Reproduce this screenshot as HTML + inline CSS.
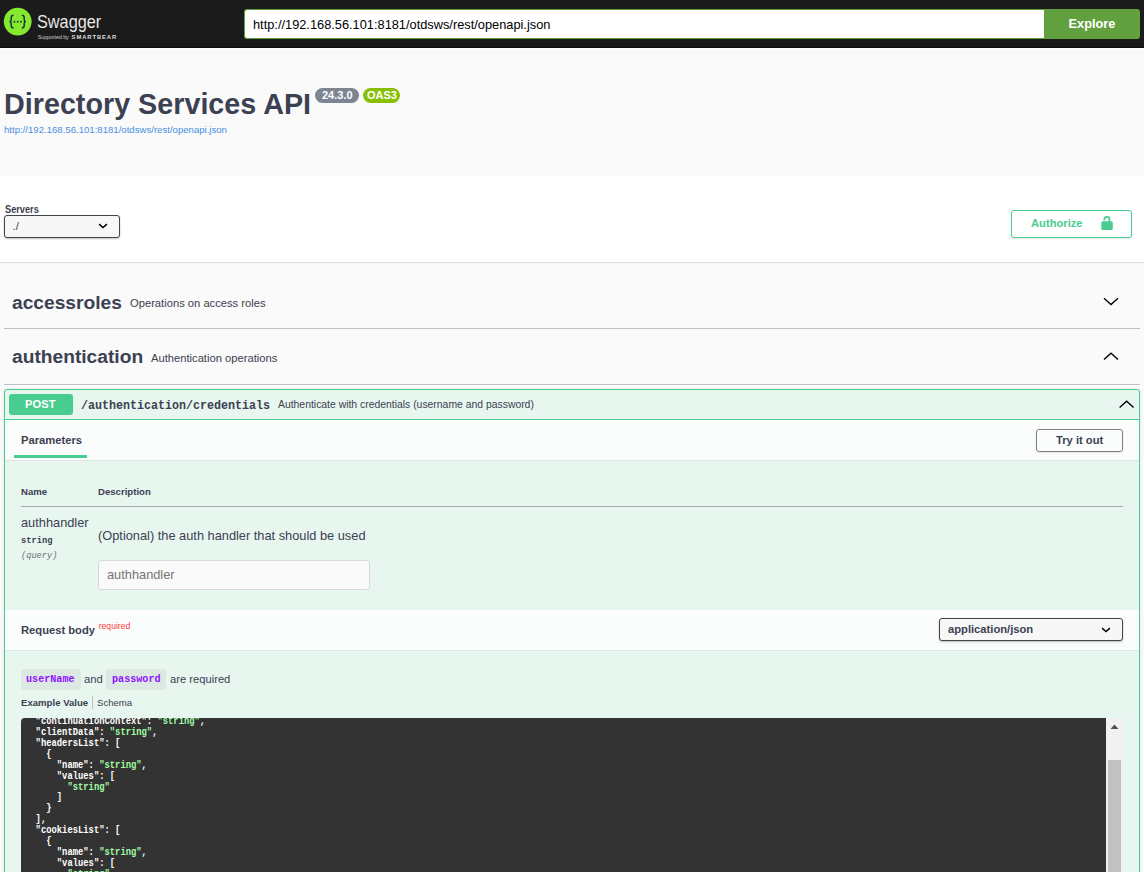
<!DOCTYPE html>
<html><head><meta charset="utf-8">
<style>
*{box-sizing:border-box;margin:0;padding:0}
html,body{width:1144px;height:872px;overflow:hidden;background:#fafafa;font-family:"Liberation Sans",sans-serif;color:#3b4151}
.a{position:absolute;white-space:pre}
#top{position:absolute;left:0;top:0;width:1144px;height:47px;background:#1b1b1b}
#top2{position:absolute;left:0;top:47px;width:1144px;height:1px;background:#0e0e0e}
#top3{position:absolute;left:0;top:48px;width:1144px;height:1px;background:#fff}
#srv{position:absolute;left:0;top:176px;width:1144px;height:86px;background:#fff}
.mono{font-family:"Liberation Mono",monospace}
</style></head><body>
<div id="top"></div><div id="top2"></div><div id="top3"></div>
<!-- logo -->
<svg class="a" style="left:0;top:0" width="130" height="47" viewBox="0 0 130 47">
  <circle cx="17.7" cy="21.6" r="13.9" fill="#85ea2d"/>
  <path d="M13.6 15.2c-1.6 0-2.4.7-2.4 2.2v2.3c0 1-.5 1.7-1.6 1.9 1.1.2 1.6.9 1.6 1.9v2.3c0 1.5.8 2.2 2.4 2.2" fill="none" stroke="#173647" stroke-width="1.5"/>
  <path d="M21.8 15.2c1.6 0 2.4.7 2.4 2.2v2.3c0 1 .5 1.7 1.6 1.9-1.1.2-1.6.9-1.6 1.9v2.3c0 1.5-.8 2.2-2.4 2.2" fill="none" stroke="#173647" stroke-width="1.5"/>
  <circle cx="14.4" cy="21.7" r="0.95" fill="#173647"/>
  <circle cx="17.7" cy="21.7" r="0.95" fill="#173647"/>
  <circle cx="21" cy="21.7" r="0.95" fill="#173647"/>
</svg>
<div class="a" style="left:37px;top:11px;font-size:18.5px;line-height:22px;color:#e8e8e8;transform:scaleX(0.88);transform-origin:0 0">Swagger</div>
<div class="a" style="left:37.8px;top:33.8px;font-size:5.4px;line-height:7px;color:#c8c8c8;letter-spacing:-0.1px">Supported by <b style="font-size:5.8px;letter-spacing:0.95px;color:#dedede;margin-left:1.5px">SMARTBEAR</b></div>

<!-- url input -->
<div class="a" style="left:244px;top:9px;width:802px;height:30px;background:#fff;border:1.5px solid #62a03f;border-right:none;border-radius:3px 0 0 3px"></div>
<div class="a" style="left:253px;top:16px;font-size:12.8px;color:#000;line-height:18px">http://192.168.56.101:8181/otdsws/rest/openapi.json</div>
<div class="a" style="left:1044px;top:9px;width:96px;height:30px;background:#62a03f;border-radius:0 3px 3px 0"></div>
<div class="a" style="left:1068.5px;top:15px;font-size:12.8px;font-weight:bold;color:#fff;line-height:18px">Explore</div>

<!-- info -->
<div class="a" style="left:4px;top:86px;font-size:29.8px;font-weight:bold;line-height:36px;color:#3b4151;transform:scaleX(0.964);transform-origin:0 0">Directory Services API</div>
<div class="a" style="left:315px;top:88px;width:44px;height:15px;background:#7d8492;border-radius:8px"></div>
<div class="a" style="left:322px;top:89px;font-size:11px;font-weight:bold;color:#fff;line-height:13px">24.3.0</div>
<div class="a" style="left:363px;top:88px;width:37px;height:15px;background:#89bf04;border-radius:8px"></div>
<div class="a" style="left:367px;top:89px;font-size:11px;font-weight:bold;color:#fff;line-height:13px">OAS3</div>
<div class="a" style="left:4px;top:124px;font-size:9.6px;color:#4990e2;line-height:12px">http://192.168.56.101:8181/otdsws/rest/openapi.json</div>

<!-- servers -->
<div id="srv"></div>
<div class="a" style="left:0;top:262px;width:1144px;height:1px;background:#dedede"></div>
<div class="a" style="left:0;top:263px;width:1144px;height:1px;background:#f4f4f4"></div>
<div class="a" style="left:4.8px;top:203.2px;font-size:10.6px;font-weight:bold;line-height:12px;transform:scaleX(0.87);transform-origin:0 0">Servers</div>
<div class="a" style="left:4px;top:215px;width:116px;height:23px;background:#f7f7f7;border:1.5px solid #41444e;border-radius:3px;box-shadow:0 1px 2px rgba(0,0,0,.25)"></div>
<div class="a" style="left:12.6px;top:220px;font-size:11.2px;line-height:12px">./</div>
<svg class="a" style="left:97px;top:221px" width="12" height="10" viewBox="0 0 12 10"><path d="M2.1 3.1l3.9 3.5 3.9-3.5" fill="none" stroke="#000" stroke-width="1.45"/></svg>

<div class="a" style="left:1011px;top:210px;width:121px;height:28px;border:1.6px solid #49cc90;border-radius:3px;background:#fff;box-shadow:0 1px 2px rgba(0,0,0,.1)"></div>
<div class="a" style="left:1031px;top:216px;font-size:11.2px;font-weight:bold;color:#49cc90;line-height:14px">Authorize</div>
<svg class="a" style="left:1094px;top:210px" width="26" height="26" viewBox="0 0 26 26">
  <path d="M10.4 9.6A2.55 2.55 0 0 1 15.5 9.4V12" fill="none" stroke="#49cc90" stroke-width="1.8" stroke-linecap="round"/>
  <rect x="7.3" y="11.3" width="11.5" height="8.7" rx="1.6" fill="#49cc90"/>
</svg>

<!-- tags -->
<div class="a" style="left:12px;top:290.5px;font-size:19.2px;font-weight:bold;line-height:24px">accessroles</div>
<div class="a" style="left:130px;top:296px;font-size:11.2px;line-height:14px">Operations on access roles</div>
<svg class="a" style="left:1102px;top:294px" width="18" height="14" viewBox="0 0 18 14"><path d="M2 4.2l7 6.4 7-6.4" fill="none" stroke="#000" stroke-width="1.35"/></svg>
<div class="a" style="left:4px;top:328px;width:1136px;height:1px;background:rgba(59,65,81,.3)"></div>

<div class="a" style="left:12px;top:345px;font-size:19.2px;font-weight:bold;line-height:24px">authentication</div>
<div class="a" style="left:151px;top:351px;font-size:11.2px;line-height:14px">Authentication operations</div>
<svg class="a" style="left:1102px;top:349px" width="18" height="14" viewBox="0 0 18 14"><path d="M2 10.6l7-6.4 7 6.4" fill="none" stroke="#000" stroke-width="1.35"/></svg>
<div class="a" style="left:4px;top:384px;width:1136px;height:1px;background:rgba(59,65,81,.3)"></div>

<!-- opblock -->
<div class="a" style="left:4px;top:389px;width:1136px;height:500px;background:#e8f6f0;border:1px solid #49cc90;border-radius:3px;box-shadow:0 0 3px rgba(0,0,0,.12)"></div>
<div class="a" style="left:5px;top:419px;width:1134px;height:1px;background:#49cc90"></div>
<div class="a" style="left:9px;top:394px;width:64px;height:21px;background:#49cc90;border-radius:3px"></div>
<div class="a" style="left:25px;top:397px;font-size:11.2px;font-weight:bold;color:#fff;line-height:14px">POST</div>
<div class="a mono" style="left:80.5px;top:398px;font-size:13.2px;font-weight:bold;line-height:16px;color:#3b4151;transform:scaleX(0.885);transform-origin:0 0">/authentication/credentials</div>
<div class="a" style="left:278px;top:398px;font-size:10.4px;line-height:13px;color:#3b4151">Authenticate with credentials (username and password)</div>
<svg class="a" style="left:1117px;top:397px" width="20" height="14" viewBox="0 0 20 14"><path d="M2.6 10.6l7-6.4 7 6.4" fill="none" stroke="#000" stroke-width="1.35"/></svg>

<!-- tab header -->
<div class="a" style="left:5px;top:420px;width:1134px;height:40px;background:rgba(255,255,255,.8)"></div>
<div class="a" style="left:5px;top:460px;width:1134px;height:1px;background:rgba(59,65,81,.08)"></div>
<div class="a" style="left:21px;top:433px;font-size:11.2px;font-weight:bold;line-height:14px">Parameters</div>
<div class="a" style="left:14px;top:455px;width:73px;height:3px;background:#49cc90"></div>
<div class="a" style="left:1036px;top:429px;width:87px;height:23px;border:1.5px solid #808080;border-radius:3px;background:transparent;box-shadow:0 1px 2px rgba(0,0,0,.1)"></div>
<div class="a" style="left:1056px;top:433px;font-size:11.2px;font-weight:bold;line-height:14px">Try it out</div>

<!-- params table -->
<div class="a" style="left:21px;top:486px;font-size:9.6px;font-weight:bold;line-height:11px">Name</div>
<div class="a" style="left:98px;top:486px;font-size:9.6px;font-weight:bold;line-height:11px">Description</div>
<div class="a" style="left:21px;top:506px;width:1102px;height:1px;background:rgba(59,65,81,.4)"></div>
<div class="a" style="left:21px;top:516px;font-size:12.8px;line-height:14px">authhandler</div>
<div class="a mono" style="left:20.75px;top:535px;font-size:9.6px;font-weight:bold;line-height:11px;transform:scaleX(0.913);transform-origin:0 0">string</div>
<div class="a mono" style="left:20.75px;top:550px;font-size:9.6px;font-style:italic;color:#707070;line-height:11px;transform:scaleX(0.903);transform-origin:0 0">(query)</div>
<div class="a" style="left:98px;top:528.3px;font-size:12.8px;line-height:15px">(Optional) the auth handler that should be used</div>
<div class="a" style="left:98px;top:560px;width:272px;height:30px;background:#fafafa;border:1px solid #d9d9d9;border-radius:3px"></div>
<div class="a" style="left:107px;top:567px;font-size:12.8px;color:#757575;line-height:15px">authhandler</div>

<!-- request body header -->
<div class="a" style="left:5px;top:610px;width:1134px;height:40px;background:rgba(255,255,255,.8)"></div>
<div class="a" style="left:5px;top:650px;width:1134px;height:1px;background:rgba(59,65,81,.08)"></div>
<div class="a" style="left:21px;top:623px;font-size:11.2px;font-weight:bold;line-height:14px">Request body</div>
<div class="a" style="left:98.7px;top:621px;font-size:8.64px;color:#f93e3e;line-height:10px">required</div>
<div class="a" style="left:939px;top:618px;width:184px;height:23px;background:#f7f7f7;border:1.5px solid #41444e;border-radius:3px;box-shadow:0 1px 2px rgba(0,0,0,.25)"></div>
<div class="a" style="left:948px;top:622px;font-size:11.2px;font-weight:bold;line-height:14px">application/json</div>
<svg class="a" style="left:1100px;top:624px" width="12" height="10" viewBox="0 0 12 10"><path d="M2.1 4.1l3.9 3.5 3.9-3.5" fill="none" stroke="#000" stroke-width="1.45"/></svg>

<!-- required chips -->
<div class="a" style="left:21px;top:669px;width:60px;height:21px;background:rgba(0,0,0,.05);border-radius:3px"></div>
<div class="a mono" style="left:26.2px;top:673.2px;font-size:11px;font-weight:bold;color:#9012fe;line-height:13px;transform:scaleX(0.92);transform-origin:0 0">userName</div>
<div class="a" style="left:84px;top:672px;font-size:11.2px;line-height:14px">and</div>
<div class="a" style="left:106px;top:669px;width:60px;height:21px;background:rgba(0,0,0,.05);border-radius:3px"></div>
<div class="a mono" style="left:111.8px;top:673.2px;font-size:11px;font-weight:bold;color:#9012fe;line-height:13px;transform:scaleX(0.92);transform-origin:0 0">password</div>
<div class="a" style="left:170px;top:672px;font-size:11.2px;line-height:14px">are required</div>
<div class="a" style="left:21px;top:697px;font-size:9.6px;font-weight:bold;line-height:11px">Example Value</div>
<div class="a" style="left:92px;top:696px;width:1px;height:13px;background:rgba(0,0,0,.2)"></div>
<div class="a" style="left:97px;top:697px;font-size:9.6px;line-height:11px">Schema</div>

<!-- code -->
<div class="a" style="left:21px;top:718px;width:1085px;height:200px;background:#333;border-radius:4px 0 0 0;overflow:hidden">
<pre class="mono" style="position:absolute;left:4px;top:-1.1px;font-size:10px;font-weight:bold;line-height:10.93px;color:#fff;transform:scaleX(0.883);transform-origin:0 0">  "continuationContext": <span style="color:#a2fca2">"string"</span>,
  "clientData": <span style="color:#a2fca2">"string"</span>,
  "headersList": [
    {
      "name": <span style="color:#a2fca2">"string"</span>,
      "values": [
        <span style="color:#a2fca2">"string"</span>
      ]
    }
  ],
  "cookiesList": [
    {
      "name": <span style="color:#a2fca2">"string"</span>,
      "values": [
        <span style="color:#a2fca2">"string"</span>
      ]</pre>
</div>
<div class="a" style="left:1106px;top:718px;width:17px;height:200px;background:#f1f1f1"></div>
<svg class="a" style="left:1106px;top:718px" width="17" height="17" viewBox="0 0 17 17"><path d="M4.5 11h8l-4-4.5z" fill="#505050"/></svg>
<div class="a" style="left:1108px;top:760px;width:13px;height:120px;background:#c1c1c1"></div>

</body></html>
